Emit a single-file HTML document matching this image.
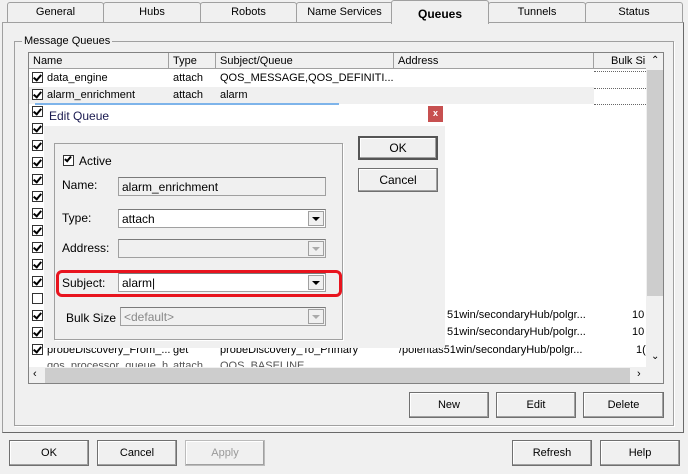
<!DOCTYPE html>
<html><head><meta charset="utf-8"><style>
*{box-sizing:border-box;margin:0;padding:0}
body{width:688px;height:474px;background:#f0f0f0;font-family:"Liberation Sans",sans-serif;font-size:11px;color:#000;position:relative;overflow:hidden}
.a{position:absolute}
.tab{position:absolute;top:2px;height:21px;border:1px solid #a0a0a0;border-bottom:none;background:#f0f0f0;text-align:center;line-height:19px;border-radius:3px 3px 0 0}
.btn{position:absolute;height:26px;border:1px solid #707070;background:#f0f0f0;text-align:center;line-height:24px;box-shadow:inset -1px -1px #a0a0a0,inset 1px 1px #fff}
.cb{position:absolute;width:11px;height:11px;border:1px solid #333;background:#fff;left:32px}
.cb.c::after{content:"";position:absolute;left:2px;top:0px;width:3px;height:6px;border:solid #000;border-width:0 2px 2px 0;transform:rotate(40deg)}
.t{position:absolute;white-space:nowrap}
.fld{position:absolute;height:19px;border:1px solid #a0a0a0;border-top-color:#7a7a7a;background:#fff;padding-left:3px;line-height:18px;font-size:12px}
.dd{position:absolute;right:1px;top:1px;width:16px;height:15px;background:#f0f0f0;border:1px solid #a0a0a0}
.dd::after{content:"";position:absolute;left:3px;top:5px;border-left:4px solid transparent;border-right:4px solid transparent;border-top:4px solid #000}
.dd.g::after{border-top-color:#aaa}
</style></head><body>
<div class="tab" style="left:7px;width:97px">General</div>
<div class="tab" style="left:103px;width:98px">Hubs</div>
<div class="tab" style="left:200px;width:97px">Robots</div>
<div class="tab" style="left:296px;width:97px">Name Services</div>
<div class="tab" style="left:488px;width:98px">Tunnels</div>
<div class="tab" style="left:585px;width:98px">Status</div>
<div class="a" style="left:2px;top:22px;width:682px;height:411px;border:1px solid #a0a0a0;border-right-color:#696969;border-bottom-color:#696969"></div>
<div class="tab" style="left:391px;top:0;width:98px;height:24px;font-weight:bold;line-height:26px;font-size:12px;z-index:2">Queues</div>
<div class="a" style="left:14px;top:41px;width:660px;height:385px;border:1px solid #a0a0a0;box-shadow:1px 1px #fff"></div>
<div class="t" style="left:22px;top:35px;background:#f0f0f0;padding:0 2px">Message Queues</div>
<div class="a" style="left:28px;top:52px;width:636px;height:332px;border:1px solid #828282;background:#fff;overflow:hidden">
 <div class="a" style="left:0;top:0;width:617px;height:16px;background:#f0f0f0;border-bottom:1px solid #a0a0a0"></div>
 <div class="a" style="left:139px;top:0;height:16px;border-left:1px solid #a0a0a0"></div>
 <div class="a" style="left:186px;top:0;height:16px;border-left:1px solid #a0a0a0"></div>
 <div class="a" style="left:364px;top:0;height:16px;border-left:1px solid #a0a0a0"></div>
 <div class="a" style="left:564px;top:0;height:16px;border-left:1px solid #a0a0a0"></div>
 <div class="t" style="left:4px;top:2px">Name</div>
 <div class="t" style="left:144px;top:2px">Type</div>
 <div class="t" style="left:191px;top:2px">Subject/Queue</div>
 <div class="t" style="left:369px;top:2px">Address</div>
 <div class="t" style="left:582px;top:2px">Bulk Si</div>
 <div class="a" style="left:0;top:34px;width:565px;height:17px;background:#f0f0f0"></div>
 <div class="a" style="left:565px;top:18px;width:52px;border-top:1px dotted #666"></div>
 <div class="a" style="left:565px;top:35px;width:52px;border-top:1px dotted #666"></div>
 <div class="a" style="left:565px;top:51px;width:52px;border-top:1px dotted #666"></div>
 <div class="t" style="left:18px;top:19px">data_engine</div><div class="t" style="left:144px;top:19px">attach</div><div class="t" style="left:191px;top:19px">QOS_MESSAGE,QOS_DEFINITI...</div>
 <div class="t" style="left:18px;top:36px">alarm_enrichment</div><div class="t" style="left:144px;top:36px">attach</div><div class="t" style="left:191px;top:36px">alarm</div>
 <div class="t" style="left:418px;top:256px">51win/secondaryHub/polgr...</div><div class="t" style="left:603px;top:256px">10</div>
 <div class="t" style="left:418px;top:273px">51win/secondaryHub/polgr...</div><div class="t" style="left:603px;top:273px">10</div>
 <div class="t" style="left:18px;top:291px">probeDiscovery_From_...</div><div class="t" style="left:144px;top:291px">get</div><div class="t" style="left:191px;top:291px">probeDiscovery_To_Primary</div><div class="t" style="left:370px;top:291px">/polentas51win/secondaryHub/polgr...</div><div class="t" style="left:607px;top:291px">1(</div>
 <div class="t" style="left:18px;top:307px;color:#555">qos_processor_queue_h</div><div class="t" style="left:144px;top:307px;color:#555">attach</div><div class="t" style="left:191px;top:307px;color:#555">QOS_BASELINE</div>
 <div class="a" style="left:617px;top:0;width:17px;height:314px;background:#f0f0f0"></div>
 <div class="a" style="left:618px;top:17px;width:16px;height:226px;background:#cdcdcd"></div>
 <div class="t" style="left:622px;top:2px;font-size:10px">&#8963;</div>
 <div class="t" style="left:622px;top:298px;font-size:10px">&#8964;</div>
 <div class="a" style="left:0;top:314px;width:634px;height:17px;background:#f0f0f0"></div>
 <div class="a" style="left:16px;top:315px;width:585px;height:15px;background:#cdcdcd"></div>
 <div class="t" style="left:4px;top:315px">&lsaquo;</div><div class="t" style="left:608px;top:315px">&rsaquo;</div>
</div>
<div class="cb c" style="top:72px"></div><div class="cb c" style="top:89px"></div>
<div class="cb c" style="top:106px"></div><div class="cb c" style="top:123px"></div>
<div class="cb c" style="top:140px"></div><div class="cb c" style="top:157px"></div>
<div class="cb c" style="top:174px"></div><div class="cb c" style="top:191px"></div>
<div class="cb c" style="top:208px"></div><div class="cb c" style="top:225px"></div>
<div class="cb c" style="top:242px"></div><div class="cb c" style="top:259px"></div>
<div class="cb c" style="top:276px"></div><div class="cb" style="top:293px"></div>
<div class="cb c" style="top:310px"></div><div class="cb c" style="top:327px"></div>
<div class="cb c" style="top:344px"></div>
<div class="a" style="left:35px;top:103px;width:304px;height:2px;background:#7eb4ea"></div>
<div class="a" style="left:44px;top:105px;width:401px;height:243px;background:#f0f0f0">
 <div class="a" style="left:0;top:0;width:401px;height:21px;background:#fff"></div>
 <div class="t" style="left:5px;top:4px;font-size:12px;color:#1a1a50">Edit Queue</div>
 <div class="a" style="left:384px;top:1px;width:15px;height:16px;background:#c75050;color:#fff;text-align:center;line-height:15px;font-size:9px;font-weight:bold">x</div>
 <div class="a" style="left:10px;top:38px;width:289px;height:197px;border:1px solid #a0a0a0;box-shadow:1px 1px #fff"></div>
 <div class="a" style="left:19px;top:50px;width:11px;height:11px;border:1px solid #333;background:#fff"></div>
 <div class="a" style="left:22px;top:50px;width:4px;height:7px;border:solid #000;border-width:0 2px 2px 0;transform:rotate(40deg)"></div>
 <div class="t" style="left:35px;top:49px;font-size:12px">Active</div>
 <div class="t" style="left:18px;top:73px;font-size:12px">Name:</div>
 <div class="fld" style="left:74px;top:72px;width:208px;background:#f0f0f0;color:#000">alarm_enrichment</div>
 <div class="t" style="left:18px;top:106px;font-size:12px">Type:</div>
 <div class="fld" style="left:74px;top:104px;width:208px">attach<div class="dd"></div></div>
 <div class="t" style="left:18px;top:136px;font-size:12px">Address:</div>
 <div class="fld" style="left:74px;top:134px;width:208px;background:#f0f0f0"><div class="dd g"></div></div>
 <div class="a" style="left:12px;top:165px;width:286px;height:27px;border:3px solid #e8141e;border-radius:6px"></div>
 <div class="t" style="left:18px;top:171px;font-size:12px">Subject:</div>
 <div class="fld" style="left:74px;top:168px;width:208px">alarm|<div class="dd"></div></div>
 <div class="t" style="left:22px;top:206px;font-size:12px">Bulk Size</div>
 <div class="fld" style="left:76px;top:202px;width:206px;background:#f0f0f0;color:#888">&lt;default&gt;<div class="dd g"></div></div>
 <div class="btn" style="left:314px;top:31px;width:80px;height:24px;border:2px solid #555;line-height:20px;font-size:12px">OK</div>
 <div class="btn" style="left:314px;top:63px;width:80px;height:24px;line-height:22px;font-size:12px">Cancel</div>
</div>
<div class="btn" style="left:409px;top:392px;width:80px">New</div>
<div class="btn" style="left:496px;top:392px;width:80px">Edit</div>
<div class="btn" style="left:583px;top:392px;width:81px">Delete</div>
<div class="btn" style="left:9px;top:440px;width:80px">OK</div>
<div class="btn" style="left:97px;top:440px;width:80px">Cancel</div>
<div class="btn" style="left:185px;top:440px;width:80px;color:#999;border-color:#bbb">Apply</div>
<div class="btn" style="left:512px;top:440px;width:80px">Refresh</div>
<div class="btn" style="left:600px;top:440px;width:80px">Help</div>
</body></html>
